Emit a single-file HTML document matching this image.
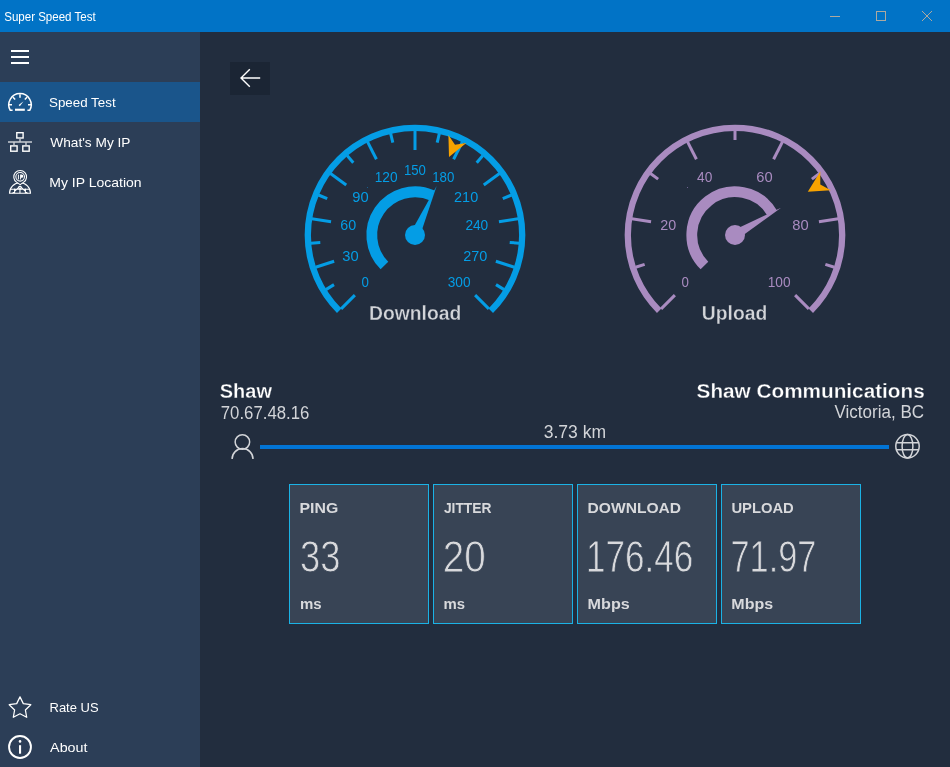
<!DOCTYPE html>
<html><head><meta charset="utf-8"><style>
*{margin:0;padding:0}
html,body{width:950px;height:767px;overflow:hidden;background:#222D3E;font-family:"Liberation Sans",sans-serif}
svg{position:absolute;left:0;top:0;display:block;will-change:transform;font-family:"Liberation Sans",sans-serif}
</style></head><body>
<svg width="950" height="767" font-family="Liberation Sans">
<rect x="0" y="0" width="950" height="32" fill="#0173C6"/>
<text x="4.20" y="20.90" font-size="12.4" font-weight="400" fill="white" textLength="91.50" lengthAdjust="spacingAndGlyphs">Super Speed Test</text>
<line x1="830" y1="16.5" x2="840" y2="16.5" stroke="#ADA99F" stroke-width="1"/>
<rect x="876.5" y="11.5" width="9" height="9" fill="none" stroke="#ADA99F" stroke-width="1"/>
<path d="M922,11 L932,21 M932,11 L922,21" stroke="#ADA99F" stroke-width="1"/>
<rect x="0" y="32" width="200" height="735" fill="#2C3E57"/>
<path d="M11,51 H29 M11,57 H29 M11,63 H29" stroke="#fff" stroke-width="2"/>
<rect x="0" y="82" width="200" height="40" fill="#1A558B"/>

<g transform="translate(0,0.6)"><g fill="none" stroke="#fff" stroke-width="1.5" stroke-linecap="butt">
 <path d="M12.6,109.6 L10.2,109.6 A11.2,11.2 0 1 1 29.8,109.6 L27.4,109.6"/>
 <path d="M20,93.6 V97.2 M13.0,96.7 L15.2,98.9 M27.0,96.7 L24.8,98.9 M8.9,104.2 H12 M31.1,104.2 H28"/>
</g>
<path d="M18.6,104.4 L23.6,100.6 L19.8,105.6 Z" fill="#fff"/></g>
<rect x="15" y="108.7" width="9.8" height="2.1" fill="#fff"/>
<g fill="none" stroke="#fff" stroke-width="1.4">
 <rect x="16.8" y="132.7" width="6.3" height="5.3"/>
 <rect x="10.7" y="145.9" width="6.4" height="5.3"/>
 <rect x="22.8" y="145.9" width="6.4" height="5.3"/>
</g>
<g fill="none" stroke="#C8CDD3" stroke-width="1.4">
 <path d="M20,138.7 V142 M8,142 H32 M14,142 V145.2 M26,142 V145.2"/>
</g>
<g fill="none" stroke="#fff" stroke-width="1.1">
 <path d="M9.5,193.3 A10.5,10.5 0 0 1 30.5,193.3 Z"/>
 <path d="M20,186.2 L12.5,193.3 M20,186.2 L27.5,193.3 M14.6,188.6 V193.3 M19.95,188.8 V193.3 M25.4,188.6 V193.3 M10.6,189.2 H29.4"/>
 <circle cx="19.95" cy="187.5" r="1.3"/>
 <path d="M20.15,184.6 L16.54,182.13 A6.4,6.4 0 1 1 23.76,182.13 Z" fill="#2C3E57"/>
 <circle cx="20.15" cy="176.85" r="4.3"/>
</g>
<g fill="#fff">
 <rect x="17.9" y="174.6" width="1" height="4.8"/>
 <path d="M20.1,174.6 h1.6 a1.55,1.55 0 0 1 0,3.1 h-0.6 v1.7 h-1 Z"/>
</g>
<polygon points="20,696.9 23.3,703.6 30.8,704.7 25.4,710 26.7,717.3 20,713.8 13.3,717.3 14.6,710 9.2,704.7 16.7,703.6" fill="none" stroke="#fff" stroke-width="1.25" stroke-linejoin="round"/>
<circle cx="20" cy="747" r="10.95" fill="none" stroke="#fff" stroke-width="1.9"/>
<circle cx="20.05" cy="741.4" r="1.3" fill="#fff"/>
<rect x="19" y="745.2" width="2.1" height="8.5" fill="#fff"/>
<g fill="none" stroke="#D2D4D8" stroke-width="1.5">
 <circle cx="242.4" cy="442" r="7.25"/>
 <path d="M232.1,459 A10.45,10.45 0 0 1 253,459"/>
 <circle cx="907.5" cy="446.3" r="11.7"/>
 <ellipse cx="907.5" cy="446.3" rx="5.4" ry="11.7"/>
 <path d="M896.5,442.8 H918.5 M896.5,449.8 H918.5"/>
</g>

<text x="49.00" y="106.80" font-size="13.5" font-weight="400" fill="white" textLength="66.63" lengthAdjust="spacingAndGlyphs">Speed Test</text><text x="50.30" y="146.80" font-size="13.5" font-weight="400" fill="white" textLength="80.21" lengthAdjust="spacingAndGlyphs">What&#39;s My IP</text><text x="49.30" y="187.40" font-size="13.5" font-weight="400" fill="white" textLength="92.27" lengthAdjust="spacingAndGlyphs">My IP Location</text><text x="49.51" y="712.00" font-size="13.5" font-weight="400" fill="white" textLength="49.09" lengthAdjust="spacingAndGlyphs">Rate US</text><text x="50.10" y="751.80" font-size="13.5" font-weight="400" fill="white" textLength="37.40" lengthAdjust="spacingAndGlyphs">About</text>
<rect x="230" y="62" width="40" height="33" fill="#1B2534"/>
<path d="M240.8,78 H260.2 M249.8,69.2 L241,78 L249.8,86.8" fill="none" stroke="#fff" stroke-width="1.4"/>
<path d="M339.20,310.80 A107.2,107.2 0 1 1 490.80,310.80" fill="none" stroke="#049DE5" stroke-width="6.3"/>
<line x1="341.11" y1="308.89" x2="354.90" y2="295.10" stroke="#049DE5" stroke-width="3"/>
<line x1="325.90" y1="289.60" x2="334.00" y2="284.64" stroke="#049DE5" stroke-width="3"/>
<line x1="315.61" y1="267.29" x2="334.16" y2="261.27" stroke="#049DE5" stroke-width="3"/>
<line x1="310.82" y1="243.20" x2="320.29" y2="242.45" stroke="#049DE5" stroke-width="3"/>
<line x1="311.79" y1="218.65" x2="331.05" y2="221.70" stroke="#049DE5" stroke-width="3"/>
<line x1="318.45" y1="195.01" x2="327.23" y2="198.65" stroke="#049DE5" stroke-width="3"/>
<line x1="330.46" y1="173.58" x2="346.23" y2="185.04" stroke="#049DE5" stroke-width="3"/>
<line x1="347.13" y1="155.54" x2="353.30" y2="162.76" stroke="#049DE5" stroke-width="3"/>
<line x1="367.56" y1="141.89" x2="376.41" y2="159.26" stroke="#049DE5" stroke-width="3"/>
<line x1="390.60" y1="133.39" x2="392.82" y2="142.62" stroke="#049DE5" stroke-width="3"/>
<line x1="415.00" y1="130.50" x2="415.00" y2="150.00" stroke="#049DE5" stroke-width="3"/>
<line x1="439.40" y1="133.39" x2="437.18" y2="142.62" stroke="#049DE5" stroke-width="3"/>
<line x1="462.44" y1="141.89" x2="453.59" y2="159.26" stroke="#049DE5" stroke-width="3"/>
<line x1="482.87" y1="155.54" x2="476.70" y2="162.76" stroke="#049DE5" stroke-width="3"/>
<line x1="499.54" y1="173.58" x2="483.77" y2="185.04" stroke="#049DE5" stroke-width="3"/>
<line x1="511.55" y1="195.01" x2="502.77" y2="198.65" stroke="#049DE5" stroke-width="3"/>
<line x1="518.21" y1="218.65" x2="498.95" y2="221.70" stroke="#049DE5" stroke-width="3"/>
<line x1="519.18" y1="243.20" x2="509.71" y2="242.45" stroke="#049DE5" stroke-width="3"/>
<line x1="514.39" y1="267.29" x2="495.84" y2="261.27" stroke="#049DE5" stroke-width="3"/>
<line x1="504.10" y1="289.60" x2="496.00" y2="284.64" stroke="#049DE5" stroke-width="3"/>
<line x1="488.89" y1="308.89" x2="475.10" y2="295.10" stroke="#049DE5" stroke-width="3"/>
<text x="361.40" y="286.80" font-size="13.9" font-weight="400" fill="#049DE5" textLength="7.40" lengthAdjust="spacingAndGlyphs">0</text>
<text x="342.26" y="261.30" font-size="13.9" font-weight="400" fill="#049DE5" textLength="16.36" lengthAdjust="spacingAndGlyphs">30</text>
<text x="340.31" y="229.90" font-size="13.9" font-weight="400" fill="#049DE5" textLength="15.90" lengthAdjust="spacingAndGlyphs">60</text>
<text x="352.36" y="202.10" font-size="13.9" font-weight="400" fill="#049DE5" textLength="16.36" lengthAdjust="spacingAndGlyphs">90</text>
<text x="374.70" y="182.00" font-size="13.9" font-weight="400" fill="#049DE5" textLength="22.86" lengthAdjust="spacingAndGlyphs">120</text>
<text x="403.93" y="174.70" font-size="13.9" font-weight="400" fill="#049DE5" textLength="22.03" lengthAdjust="spacingAndGlyphs">150</text>
<text x="432.20" y="182.00" font-size="13.9" font-weight="400" fill="#049DE5" textLength="22.12" lengthAdjust="spacingAndGlyphs">180</text>
<text x="454.09" y="202.10" font-size="13.9" font-weight="400" fill="#049DE5" textLength="24.14" lengthAdjust="spacingAndGlyphs">210</text>
<text x="465.40" y="229.90" font-size="13.9" font-weight="400" fill="#049DE5" textLength="22.86" lengthAdjust="spacingAndGlyphs">240</text>
<text x="463.19" y="261.30" font-size="13.9" font-weight="400" fill="#049DE5" textLength="24.14" lengthAdjust="spacingAndGlyphs">270</text>
<text x="447.70" y="286.80" font-size="13.9" font-weight="400" fill="#049DE5" textLength="22.86" lengthAdjust="spacingAndGlyphs">300</text>
<path d="M384.45,265.55 A43.2,43.2 0 0 1 432.44,195.48" fill="none" stroke="#049DE5" stroke-width="10.8"/>
<polygon points="436.64,185.96 410.43,232.98 419.57,237.02" fill="#049DE5"/>
<circle cx="415" cy="235" r="10" fill="#049DE5"/>
<polygon points="448.4,135 455,144.8 466.3,143 449,157" fill="#F8A300"/>
<path d="M659.20,310.80 A107.2,107.2 0 1 1 810.80,310.80" fill="none" stroke="#A98BC0" stroke-width="6.3"/>
<line x1="661.11" y1="308.89" x2="674.90" y2="295.10" stroke="#A98BC0" stroke-width="3"/>
<line x1="635.61" y1="267.29" x2="644.65" y2="264.36" stroke="#A98BC0" stroke-width="3"/>
<line x1="631.79" y1="218.65" x2="651.05" y2="221.70" stroke="#A98BC0" stroke-width="3"/>
<line x1="650.46" y1="173.58" x2="658.14" y2="179.16" stroke="#A98BC0" stroke-width="3"/>
<line x1="687.56" y1="141.89" x2="696.41" y2="159.26" stroke="#A98BC0" stroke-width="3"/>
<line x1="735.00" y1="130.50" x2="735.00" y2="140.00" stroke="#A98BC0" stroke-width="3"/>
<line x1="782.44" y1="141.89" x2="773.59" y2="159.26" stroke="#A98BC0" stroke-width="3"/>
<line x1="819.54" y1="173.58" x2="811.86" y2="179.16" stroke="#A98BC0" stroke-width="3"/>
<line x1="838.21" y1="218.65" x2="818.95" y2="221.70" stroke="#A98BC0" stroke-width="3"/>
<line x1="834.39" y1="267.29" x2="825.35" y2="264.36" stroke="#A98BC0" stroke-width="3"/>
<line x1="808.89" y1="308.89" x2="795.10" y2="295.10" stroke="#A98BC0" stroke-width="3"/>
<text x="681.40" y="286.80" font-size="13.9" font-weight="400" fill="#A98BC0" textLength="7.40" lengthAdjust="spacingAndGlyphs">0</text>
<text x="660.31" y="229.90" font-size="13.9" font-weight="400" fill="#A98BC0" textLength="15.90" lengthAdjust="spacingAndGlyphs">20</text>
<text x="697.10" y="182.00" font-size="13.9" font-weight="400" fill="#A98BC0" textLength="15.26" lengthAdjust="spacingAndGlyphs">40</text>
<text x="756.36" y="182.00" font-size="13.9" font-weight="400" fill="#A98BC0" textLength="16.36" lengthAdjust="spacingAndGlyphs">60</text>
<text x="792.36" y="229.90" font-size="13.9" font-weight="400" fill="#A98BC0" textLength="16.36" lengthAdjust="spacingAndGlyphs">80</text>
<text x="767.70" y="286.80" font-size="13.9" font-weight="400" fill="#A98BC0" textLength="22.86" lengthAdjust="spacingAndGlyphs">100</text>
<path d="M704.45,265.55 A43.2,43.2 0 1 1 772.15,212.96" fill="none" stroke="#A98BC0" stroke-width="10.8"/>
<polygon points="781.10,207.65 732.45,230.70 737.55,239.30" fill="#A98BC0"/>
<circle cx="735" cy="235" r="10" fill="#A98BC0"/>
<polygon points="820.3,171.6 820.3,184.4 830.8,190.2 807.8,191.7" fill="#F8A300"/>
<rect x="367" y="187" width="1" height="1" fill="#1A5E8C"/><rect x="687" y="187" width="1" height="1" fill="#6F6390"/>
<text x="369.10" y="320.10" font-size="20.4" font-weight="700" fill="#D2D4D8" textLength="92.19" lengthAdjust="spacingAndGlyphs" stroke="#222D3E" stroke-width="0.3">Download</text><text x="701.81" y="320.30" font-size="20.4" font-weight="700" fill="#D2D4D8" textLength="65.49" lengthAdjust="spacingAndGlyphs" stroke="#222D3E" stroke-width="0.3">Upload</text>
<text x="219.81" y="398.40" font-size="20.8" font-weight="700" fill="white" textLength="52.11" lengthAdjust="spacingAndGlyphs" stroke="#222D3E" stroke-width="0.3">Shaw</text><text x="696.60" y="398.20" font-size="20.8" font-weight="700" fill="white" textLength="228.09" lengthAdjust="spacingAndGlyphs" stroke="#222D3E" stroke-width="0.3">Shaw Communications</text><text x="220.80" y="418.70" font-size="17.6" font-weight="400" fill="#D2D4D8" textLength="88.55" lengthAdjust="spacingAndGlyphs">70.67.48.16</text><text x="834.50" y="418.40" font-size="17.6" font-weight="400" fill="#D2D4D8" textLength="89.55" lengthAdjust="spacingAndGlyphs">Victoria, BC</text><text x="543.71" y="438.00" font-size="17.6" font-weight="400" fill="#D2D4D8" textLength="62.38" lengthAdjust="spacingAndGlyphs">3.73 km</text>
<rect x="260" y="445" width="629" height="4" fill="#0274D5"/>
<rect x="289.5" y="484.5" width="139" height="139" fill="#384455" stroke="#1BB2E5"/>
<rect x="433.5" y="484.5" width="139" height="139" fill="#384455" stroke="#1BB2E5"/>
<rect x="577.5" y="484.5" width="139" height="139" fill="#384455" stroke="#1BB2E5"/>
<rect x="721.5" y="484.5" width="139" height="139" fill="#384455" stroke="#1BB2E5"/>
<text x="299.48" y="512.90" font-size="15.5" font-weight="700" fill="#D8D9DC" textLength="38.75" lengthAdjust="spacingAndGlyphs">PING</text><text x="443.90" y="512.90" font-size="15.5" font-weight="700" fill="#D8D9DC" textLength="47.65" lengthAdjust="spacingAndGlyphs">JITTER</text><text x="587.59" y="512.90" font-size="15.5" font-weight="700" fill="#D8D9DC" textLength="93.50" lengthAdjust="spacingAndGlyphs">DOWNLOAD</text><text x="731.40" y="512.90" font-size="15.5" font-weight="700" fill="#D8D9DC" textLength="62.38" lengthAdjust="spacingAndGlyphs">UPLOAD</text>
<text x="300.08" y="571.90" font-size="44.6" fill="#D8D9DC" stroke="#384455" stroke-width="0.8" textLength="40.40" lengthAdjust="spacingAndGlyphs">33</text><text x="442.87" y="571.90" font-size="44.6" fill="#D8D9DC" stroke="#384455" stroke-width="0.8" textLength="42.98" lengthAdjust="spacingAndGlyphs">20</text><text x="586.01" y="571.90" font-size="44.6" fill="#D8D9DC" stroke="#384455" stroke-width="0.8" textLength="107.26" lengthAdjust="spacingAndGlyphs">176.46</text><text x="730.49" y="571.90" font-size="44.6" fill="#D8D9DC" stroke="#384455" stroke-width="0.8" textLength="85.86" lengthAdjust="spacingAndGlyphs">71.97</text>
<text x="300.00" y="608.60" font-size="15" font-weight="700" fill="#D8D9DC" textLength="21.68" lengthAdjust="spacingAndGlyphs">ms</text><text x="443.38" y="608.60" font-size="15" font-weight="700" fill="#D8D9DC" textLength="21.59" lengthAdjust="spacingAndGlyphs">ms</text><text x="587.59" y="608.60" font-size="15" font-weight="700" fill="#D8D9DC" textLength="42.16" lengthAdjust="spacingAndGlyphs">Mbps</text><text x="731.39" y="608.60" font-size="15" font-weight="700" fill="#D8D9DC" textLength="41.85" lengthAdjust="spacingAndGlyphs">Mbps</text>
</svg>
</body></html>
